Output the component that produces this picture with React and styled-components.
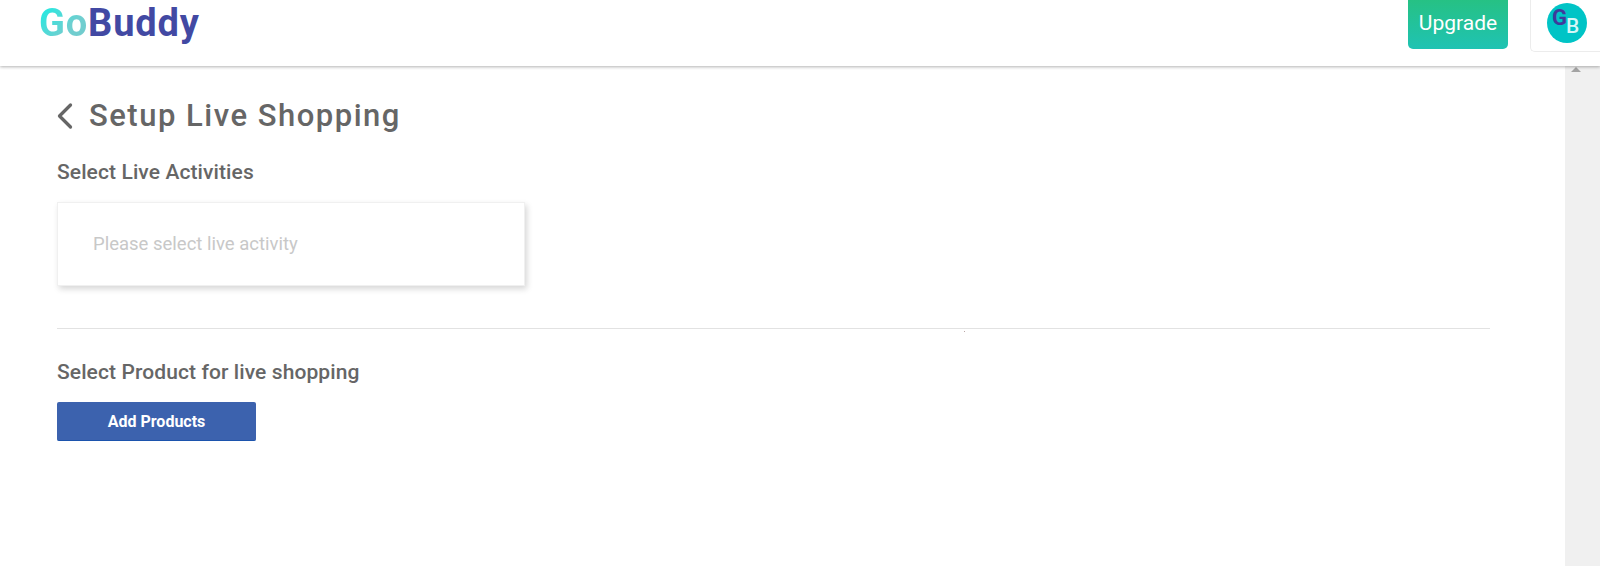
import React from 'react';
import styled, { createGlobalStyle } from 'styled-components';
import { ChevronLeft } from 'lucide-react';

const GlobalStyle = createGlobalStyle`
  html, body {
    margin: 0;
    padding: 0;
    height: 100%;
    overflow: hidden;
    background: #ffffff;
    font-family: Roboto, "Liberation Sans", sans-serif;
  }
`;

const Page = styled.div`
  width: 1600px;
  height: 566px;
  display: flex;
  flex-direction: column;
  overflow: hidden;
`;

const Header = styled.header`
  position: relative;
  z-index: 2;
  flex: none;
  height: 66px;
  box-sizing: border-box;
  padding-left: 39px;
  display: flex;
  align-items: flex-start;
  background: #ffffff;
  box-shadow: 0 1px 3px rgba(0, 0, 0, 0.3);
`;

const Logo = styled.div`
  font-size: 38px;
  line-height: 47px;
  font-weight: 700;
  letter-spacing: 0.85px;
  display: flex;
`;

const LogoGo = styled.span`
  background: linear-gradient(135deg, #0ff0e6 0%, #6fcfd0 60%, #74c9cc 100%);
  -webkit-background-clip: text;
  background-clip: text;
  color: transparent;
`;

const LogoBuddy = styled.span`
  color: #4249a3;
`;

const UpgradeButton = styled.button`
  margin-left: auto;
  width: 100px;
  height: 49px;
  border: 0;
  border-radius: 0 0 5px 5px;
  padding: 0 0 4px;
  background: linear-gradient(180deg, #26c184 0%, #1fc3b3 100%);
  color: #ffffff;
  font-family: inherit;
  font-size: 21px;
  font-weight: 400;
`;

const AccountCard = styled.div`
  margin-left: 22px;
  width: 70px;
  height: 52px;
  box-sizing: border-box;
  padding: 3px 0 0 16px;
  border: 1px solid #ececec;
  border-top: 0;
  border-right: 0;
  border-radius: 0 0 0 5px;
`;

const Avatar = styled.div`
  position: relative;
  width: 40px;
  height: 40px;
  border-radius: 50%;
  background: #00c4c6;
`;

const AvatarLetter = styled.span`
  position: absolute;
  left: ${props => props.left}px;
  top: ${props => props.top}px;
  font-size: ${props => props.size}px;
  line-height: 1;
  font-weight: ${props => props.weight};
  color: ${props => props.color};
`;

const Body = styled.div`
  flex: 1;
  display: flex;
  min-height: 0;
`;

const Content = styled.main`
  position: relative;
  flex: 1;
  padding: 32px 0 0 57px;
`;

const TitleRow = styled.div`
  display: flex;
  align-items: center;
  height: 36px;
  color: #666666;
`;

const BackIcon = styled(ChevronLeft)`
  flex: none;
  width: 44px;
  height: 44px;
  margin-left: -14px;
  margin-right: 2px;
`;

const Title = styled.h1`
  margin: 0;
  font-size: 31px;
  line-height: 36px;
  font-weight: 500;
  letter-spacing: 1.5px;
`;

const SectionLabel = styled.h2`
  margin: ${props => props.top}px 0 0;
  font-size: 21px;
  line-height: 26px;
  font-weight: 500;
  letter-spacing: 0.1px;
  color: #666666;
`;

const SelectCard = styled.div`
  margin-top: 17px;
  width: 468px;
  height: 84px;
  box-sizing: border-box;
  padding-left: 35px;
  display: flex;
  align-items: center;
  border: 1px solid #f0f0f0;
  background: #ffffff;
  box-shadow: 2px 3px 6px rgba(0, 0, 0, 0.16);
  font-size: 18.5px;
  color: #c8c8c8;
`;

const Divider = styled.hr`
  margin: 42px 0 0;
  width: 1433px;
  height: 1px;
  border: 0;
  background: #e2e2e2;
`;

const Speck = styled.span`
  position: absolute;
  left: 964px;
  top: 265px;
  width: 1px;
  height: 1px;
  background: #b9a5a5;
`;

const AddButton = styled.button`
  display: block;
  margin-top: 17px;
  width: 199px;
  height: 39px;
  box-sizing: border-box;
  padding: 0;
  border: 0;
  border-bottom: 1px solid #1c54ad;
  border-radius: 2px;
  background: #3c62ae;
  color: #ffffff;
  font-family: inherit;
  font-size: 16px;
  font-weight: 700;
`;

const Scrollbar = styled.div`
  flex: none;
  width: 35px;
  box-sizing: border-box;
  padding-left: 6px;
  background: #f0f0f0;
`;

const ScrollArrow = styled.div`
  width: 0;
  height: 0;
  margin-top: 1px;
  border-left: 5px solid transparent;
  border-right: 5px solid transparent;
  border-bottom: 5px solid #a3a3a3;
`;

function App() {
  return (
    <Page>
      <GlobalStyle />
      <Header>
        <Logo>
          <LogoGo>Go</LogoGo>
          <LogoBuddy>Buddy</LogoBuddy>
        </Logo>
        <UpgradeButton>Upgrade</UpgradeButton>
        <AccountCard>
          <Avatar>
            <AvatarLetter left={5} top={4} size={22} weight={700} color="#3f3a9c">G</AvatarLetter>
            <AvatarLetter left={19} top={13} size={21} weight={500} color="#d6f7f7">B</AvatarLetter>
          </Avatar>
        </AccountCard>
      </Header>
      <Body>
        <Content>
          <TitleRow>
            <BackIcon strokeWidth={1.8} />
            <Title>Setup Live Shopping</Title>
          </TitleRow>
          <SectionLabel top={25}>Select Live Activities</SectionLabel>
          <SelectCard>Please select live activity</SelectCard>
          <Divider />
          <Speck />
          <SectionLabel top={30}>Select Product for live shopping</SectionLabel>
          <AddButton>Add Products</AddButton>
        </Content>
        <Scrollbar>
          <ScrollArrow />
        </Scrollbar>
      </Body>
    </Page>
  );
}

export default App;
